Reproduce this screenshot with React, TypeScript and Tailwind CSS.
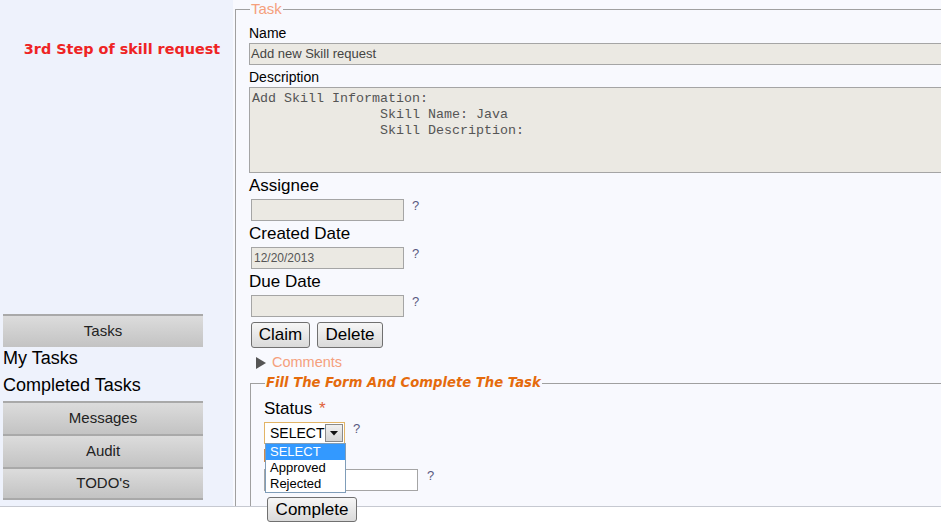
import React from 'react';

const sans = "font-['Liberation_Sans',Arial,sans-serif]";
const verdana = "font-['DejaVu_Sans',Verdana,sans-serif]";

function Help({ className = '' }: { className?: string }) {
    return <span className={`ml-2 self-start text-[13px] leading-[14px] text-[#5a5a80] ${className}`}>?</span>;
}

function SideButton({ label, last = false }: { label: string; last?: boolean }) {
    return (
        <div
            className={`h-[33px] border-t-2 border-[#a9a9a9] bg-gradient-to-b from-[#dcdcdc] to-[#c3c3c3] flex items-center justify-center text-[15px] text-[#222] ${last ? 'border-b-2' : ''}`}
        >
            {label}
        </div>
    );
}

function PushButton({ label, w }: { label: string; w: string }) {
    return (
        <button
            className={`${w} h-[26px] border border-[#707070] rounded-[3px] bg-gradient-to-b from-[#f6f6f6] to-[#dadada] text-[17px] leading-[20px] text-black`}
        >
            {label}
        </button>
    );
}

export default function App() {
    return (
        <div className={`w-[941px] h-[523px] bg-white overflow-x-clip ${sans}`}>
            <div className="flex h-[507px] border-b border-[#c6c9d1]">
                {/* SIDEBAR */}
                <aside className="w-[233px] shrink-0 bg-[#eef2fc] flex flex-col">
                    <p className={`mt-[41px] pl-[11px] text-center text-[14.4px] leading-[16px] font-bold text-[#ee2424] ${verdana}`}>
                        3rd Step of skill request
                    </p>
                    <nav className="mt-auto pb-[6px] pl-[3px] w-[203px]">
                        <SideButton label="Tasks" />
                        <div className="mt-[-2px] text-[18px] leading-[27px] text-black">
                            <div>My Tasks</div>
                            <div>Completed Tasks</div>
                        </div>
                        <div className="mt-[2px]">
                            <SideButton label="Messages" />
                            <SideButton label="Audit" />
                            <SideButton label="TODO's" last />
                        </div>
                    </nav>
                </aside>

                {/* MAIN */}
                <main className="flex-1 bg-[#f8f9fe] pl-[2px]">
                    <fieldset className="h-full w-[720px] border-t border-l border-[#a0a0a0] pl-[13px]">
                        <legend className="ml-[1px] px-[1px] text-[15px] leading-[18px] text-[#f5a07c]">Task</legend>

                        <div className="mt-[7px] text-[14px] leading-[16px] text-black">Name</div>
                        <div className="mt-[2px] h-[22px] border border-[#a5a5a5] bg-[#ebe9e3] flex items-center px-[1px] text-[13px] text-[#444]">
                            Add new Skill request
                        </div>

                        <div className="mt-[4px] text-[14px] leading-[16px] text-black">Description</div>
                        <div className="mt-[2px] h-[86px] border border-[#a5a5a5] bg-[#ebe9e3] pt-[3px] pl-[2px] whitespace-pre text-[13.33px] leading-[16px] text-[#555] font-['Liberation_Mono','Courier_New',monospace]">
                            {'Add Skill Information:\n                Skill Name: Java\n                Skill Description:'}
                        </div>

                        <div className="text-[17px] leading-[20px] text-black">
                            <div className="mt-[3px]">Assignee</div>
                            <div className="mt-[3px] flex pl-[2px]">
                                <div className="w-[153px] h-[22px] border border-[#a5a5a5] bg-[#ebe9e3]" />
                                <Help />
                            </div>
                            <div className="mt-[3px]">Created Date</div>
                            <div className="mt-[3px] flex pl-[2px]">
                                <div className="w-[153px] h-[22px] border border-[#a5a5a5] bg-[#ebe9e3] flex items-center px-[2px] text-[12px] text-[#555]">
                                    12/20/2013
                                </div>
                                <Help />
                            </div>
                            <div className="mt-[3px]">Due Date</div>
                            <div className="mt-[3px] flex pl-[2px]">
                                <div className="w-[153px] h-[22px] border border-[#a5a5a5] bg-[#ebe9e3]" />
                                <Help />
                            </div>
                            <div className="mt-[5px] flex gap-[7px] pl-[2px]">
                                <PushButton label="Claim" w="w-[59px]" />
                                <PushButton label="Delete" w="w-[66px]" />
                            </div>
                        </div>

                        <div className="mt-[6px] pl-[7px] flex items-center gap-[6px] h-[18px]">
                            <svg width="10" height="12" viewBox="0 0 10 12">
                                <path d="M0 0 L10 6 L0 12 Z" fill="#555" />
                            </svg>
                            <span className="text-[14.5px] text-[#f5a07c]">Comments</span>
                        </div>

                        {/* INNER FORM */}
                        <fieldset className="mt-[2px] ml-[1px] h-[132px] border-t border-l border-[#a0a0a0] pl-[13px]">
                            <legend
                                className={`ml-[1px] px-[1px] text-[13.2px] leading-[18px] font-bold italic text-[#e56b0d] ${verdana}`}
                            >
                                Fill The Form And Complete The Task
                            </legend>
                            <div className="mt-[7px] text-[17px] leading-[20px] text-black">
                                Status <span className="ml-[2px] text-[#e0603a]">*</span>
                            </div>
                            <div className="mt-[3px] flex">
                                <div className="relative w-[81px] h-[22px] border border-[#e2b466] bg-white flex items-center pl-[5px] text-[14px] text-black">
                                    SELECT
                                    <div className="absolute right-[1px] top-[1px] w-[18px] h-[18px] border border-[#8a8a8a] bg-gradient-to-b from-[#f0f0f0] to-[#d4d4d4] flex items-center justify-center">
                                        <svg width="8" height="5" viewBox="0 0 8 5">
                                            <path d="M0 0 L8 0 L4 4.5 Z" fill="#111" />
                                        </svg>
                                    </div>
                                    {/* open dropdown */}
                                    <div className="absolute left-0 top-[20px] z-10 w-[81px] border border-[#7f9db9] bg-white text-[13px] leading-[16px]">
                                        <div className="bg-[#3399ff] text-white pl-[4px]">SELECT</div>
                                        <div className="pl-[4px] text-black">Approved</div>
                                        <div className="pl-[4px] text-black">Rejected</div>
                                    </div>
                                </div>
                                <Help />
                            </div>
                            <div className="mt-[5px] h-[13px] w-[3px] bg-[#d08a4a]" />
                            <div className="mt-[7px] flex">
                                <div className="w-[154px] h-[22px] border border-[#a5a5a5] bg-white" />
                                <Help className="ml-[9px]" />
                            </div>
                            <div className="mt-[6px] pl-[3px]">
                                <button className="w-[90px] h-[25px] border border-[#707070] rounded-[3px] bg-gradient-to-b from-[#f6f6f6] to-[#dadada] text-[17px] leading-[20px] text-black">
                                    Complete
                                </button>
                            </div>
                        </fieldset>
                    </fieldset>
                </main>
            </div>
        </div>
    );
}
